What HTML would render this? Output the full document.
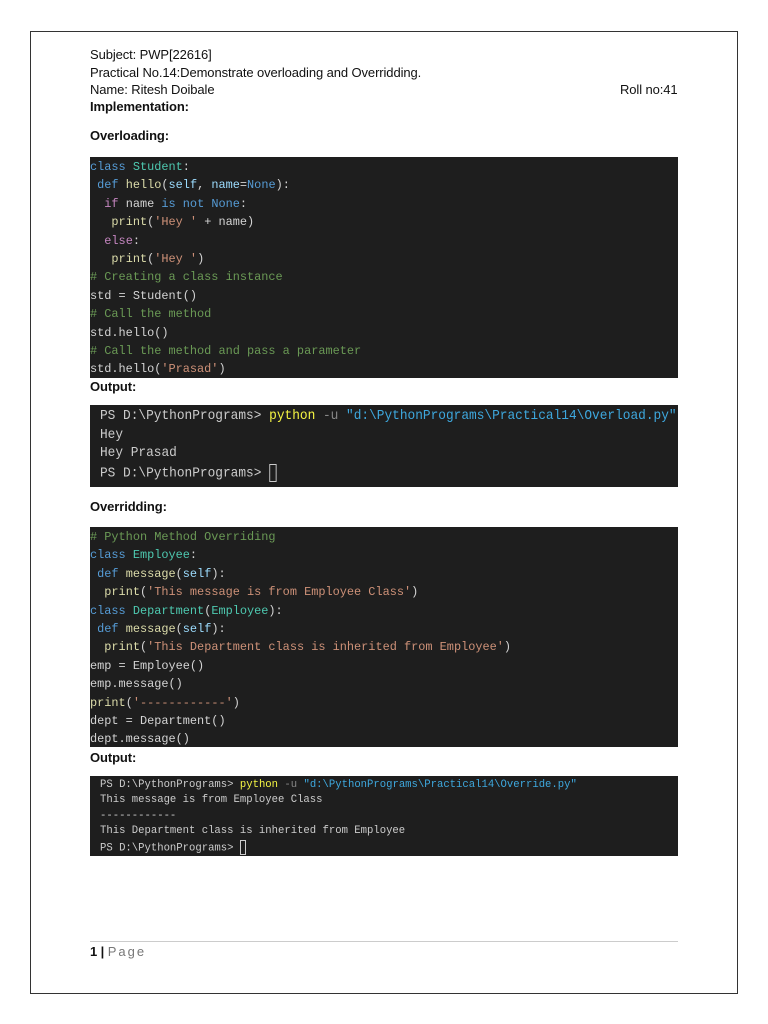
<!DOCTYPE html>
<html><head><meta charset="utf-8"><style>
body{margin:0;width:768px;height:1024px;background:#fff;position:relative;overflow:hidden;font-family:"Liberation Sans",sans-serif;}
.border{position:absolute;left:30px;top:31px;width:706px;height:961px;border:1px solid #333;}
.t{position:absolute;left:90px;font-size:13px;color:#111;white-space:nowrap;letter-spacing:-0.1px}
.b{font-weight:bold}
.blk{position:absolute;left:90px;width:588px;background:#1e1e1e;}
.code{font-family:"Liberation Mono",monospace;font-size:11.9px;color:#d4d4d4;white-space:pre;}
.code div{position:absolute;left:0;}
.kw{color:#569cd6}.cl{color:#4ec9b0}.fn{color:#dcdcaa}.st{color:#ce9178}.cm{color:#6a9955}.pk{color:#c586c0}.va{color:#9cdcfe}
.o1 div{position:absolute;left:10px;font-family:"Liberation Mono",monospace;font-size:14px;color:#ccc;white-space:pre;transform:scaleX(0.915);transform-origin:0 0}
.o2 div{position:absolute;left:10px;font-family:"Liberation Mono",monospace;font-size:10.6px;color:#ccc;white-space:pre}
.y{color:#f5f543}.gr{color:#888}.cy{color:#3ea8de}
.cur{display:inline-block;border:1px solid #ccc;vertical-align:middle}
</style></head><body>
<div class="border"></div>
<div class="t" style="top:47px">Subject: PWP[22616]</div>
<div class="t" style="top:65px">Practical No.14:Demonstrate overloading and Overridding.</div>
<div class="t" style="top:82px">Name: Ritesh Doibale</div>
<div class="t" style="top:82px;left:620px">Roll no:41</div>
<div class="t b" style="top:99px">Implementation:</div>
<div class="t b" style="top:128px">Overloading:</div>

<div class="blk code" style="top:157px;height:221px">
<div style="top:3px"><span class="kw">class</span> <span class="cl">Student</span>:</div>
<div style="top:21px"> <span class="kw">def</span> <span class="fn">hello</span>(<span class="va">self</span>, <span class="va">name</span>=<span class="kw">None</span>):</div>
<div style="top:40px">  <span class="pk">if</span> name <span class="kw">is not</span> <span class="kw">None</span>:</div>
<div style="top:58px">   <span class="fn">print</span>(<span class="st">'Hey '</span> + name)</div>
<div style="top:77px">  <span class="pk">else</span>:</div>
<div style="top:95px">   <span class="fn">print</span>(<span class="st">'Hey '</span>)</div>
<div style="top:113px" class="cm"># Creating a class instance</div>
<div style="top:132px">std = Student()</div>
<div style="top:150px" class="cm"># Call the method</div>
<div style="top:169px">std.hello()</div>
<div style="top:187px" class="cm"># Call the method and pass a parameter</div>
<div style="top:205px">std.hello(<span class="st">'Prasad'</span>)</div>
</div>
<div class="t b" style="top:379px">Output:</div>

<div class="blk o1" style="top:405px;height:82px">
<div style="top:3px">PS D:\PythonPrograms&gt; <span class="y">python</span> <span class="gr">-u</span> <span class="cy">"d:\PythonPrograms\Practical14\Overload.py"</span></div>
<div style="top:22px">Hey</div>
<div style="top:40px">Hey Prasad</div>
<div style="top:59px">PS D:\PythonPrograms&gt; <span class="cur" style="width:6px;height:16px"></span></div>
</div>

<div class="t b" style="top:499px">Overridding:</div>

<div class="blk code" style="top:527px;height:220px">
<div style="top:3px" class="cm"># Python Method Overriding</div>
<div style="top:21px"><span class="kw">class</span> <span class="cl">Employee</span>:</div>
<div style="top:40px"> <span class="kw">def</span> <span class="fn">message</span>(<span class="va">self</span>):</div>
<div style="top:58px">  <span class="fn">print</span>(<span class="st">'This message is from Employee Class'</span>)</div>
<div style="top:77px"><span class="kw">class</span> <span class="cl">Department</span>(<span class="cl">Employee</span>):</div>
<div style="top:95px"> <span class="kw">def</span> <span class="fn">message</span>(<span class="va">self</span>):</div>
<div style="top:113px">  <span class="fn">print</span>(<span class="st">'This Department class is inherited from Employee'</span>)</div>
<div style="top:132px">emp = Employee()</div>
<div style="top:150px">emp.message()</div>
<div style="top:169px"><span class="fn">print</span>(<span class="st">'------------'</span>)</div>
<div style="top:187px">dept = Department()</div>
<div style="top:205px">dept.message()</div>
</div>
<div class="t b" style="top:750px">Output:</div>

<div class="blk o2" style="top:776px;height:80px">
<div style="top:3px">PS D:\PythonPrograms&gt; <span class="y">python</span> <span class="gr">-u</span> <span class="cy">"d:\PythonPrograms\Practical14\Override.py"</span></div>
<div style="top:18px">This message is from Employee Class</div>
<div style="top:34px">------------</div>
<div style="top:49px">This Department class is inherited from Employee</div>
<div style="top:64px">PS D:\PythonPrograms&gt; <span class="cur" style="width:4px;height:13px"></span></div>
</div>

<div style="position:absolute;left:90px;top:941px;width:588px;border-top:1px solid #ccc"></div>
<div class="t" style="top:944px"><b>1 |</b> <span style="color:#777;letter-spacing:2px">Page</span></div>
</body></html>
